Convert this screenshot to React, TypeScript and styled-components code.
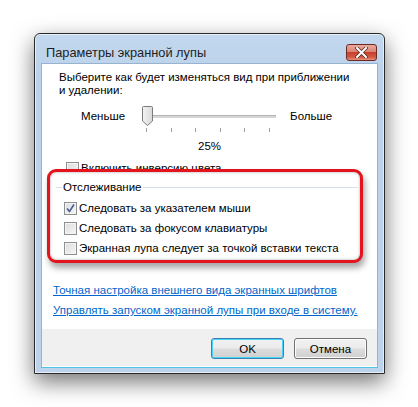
import React from 'react';
import styled, { createGlobalStyle } from 'styled-components';

const GlobalStyle = createGlobalStyle`
  html, body {
    margin: 0;
    padding: 0;
    background: #ffffff;
  }
  body {
    font-family: "Liberation Sans", Arial, sans-serif;
    font-size: 11.5px;
    color: #000;
  }
`;

const Page = styled.div`
  width: 418px;
  height: 407px;
  padding: 33px 0 0 34px;
  box-sizing: border-box;
  overflow: hidden;
`;

const Window = styled.div`
  width: 351px;
  height: 341px;
  box-sizing: border-box;
  border: 1px solid #2a2a2a;
  border-radius: 6px 6px 0 0;
  background: linear-gradient(#c2d8ef, #bcd2ea 40px, #bdd3eb);
  box-shadow: 0 8px 22px rgba(0, 0, 0, 0.55), inset 0 0 0 1px rgba(255, 255, 255, 0.6);
  display: flex;
  flex-direction: column;
  padding: 0 6px 5px 6px;
`;

const TitleBar = styled.div`
  height: 29px;
  display: flex;
  align-items: center;
  justify-content: space-between;
  padding: 0 1px 0 5px;
`;

const Title = styled.span`
  font-size: 12.8px;
  color: #1e1e1e;
  padding-top: 8px;
`;

const CloseButton = styled.div`
  width: 31px;
  height: 17px;
  margin-top: 8px;
  box-sizing: border-box;
  border: 1px solid #6b2a22;
  border-radius: 3px;
  background: linear-gradient(#e9a99c 0%, #d98676 45%, #c7402b 50%, #d05a45 80%, #e6917c 100%);
  display: flex;
  align-items: center;
  justify-content: center;
`;

const Body = styled.div`
  flex: 1;
  display: flex;
  flex-direction: column;
  border: 1px solid #98b3cf;
  border-bottom: none;
`;

const Content = styled.div`
  flex: 1;
  background: #ffffff;
  padding: 7px 0 0 0;
  display: flex;
  flex-direction: column;
`;

const Intro = styled.div`
  padding-left: 17px;
  line-height: 13px;
`;

const SliderRow = styled.div`
  display: flex;
  align-items: center;
  margin-top: 9px;
  padding-left: 39px;
  height: 20px;
`;

const SliderLabel = styled.span<{ $gap: number }>`
  margin-right: ${({ $gap }) => $gap}px;
`;

const Track = styled.div`
  position: relative;
  width: 134px;
  height: 20px;
  margin-right: 14px;
`;

const TrackLine = styled.div`
  position: absolute;
  left: 4px;
  right: 0;
  top: 9px;
  height: 2px;
  background: #d6d6d6;
  border-top: 1px solid #b4b4b4;
`;

const Thumb = styled.svg`
  position: absolute;
  left: 0;
  top: 0;
`;

const Ticks = styled.div`
  display: flex;
  justify-content: space-between;
  width: 124px;
  margin-left: 104px;
  margin-top: 2px;
  height: 4px;
`;

const Tick = styled.div`
  width: 1px;
  height: 4px;
  background: #a0a0a0;
`;

const Percent = styled.div`
  text-align: center;
  margin-top: 8px;
`;

const CheckRow = styled.div<{ $indent: number }>`
  display: flex;
  align-items: center;
  gap: 2px;
  padding-left: ${({ $indent }) => $indent}px;
  height: 20px;
`;

const Box = styled.div`
  width: 13px;
  height: 13px;
  box-sizing: border-box;
  border: 1px solid #8e8f8f;
  background: linear-gradient(135deg, #dcdcdc, #f6f6f6);
  box-shadow: inset 0 0 0 1px #f4f4f4;
  display: flex;
  align-items: center;
  justify-content: center;
`;

const CheckText = styled.span`
  white-space: nowrap;
`;

const ClippedRow = styled.div`
  height: 14px;
  overflow: hidden;
  margin-top: 6px;
`;

const Highlight = styled.div`
  position: relative;
  z-index: 1;
  margin: -3px 0 0 5px;
  width: 316px;
  height: 94px;
  box-sizing: border-box;
  border: 3px solid #e3141d;
  border-radius: 9px;
  background: #ffffff;
  box-shadow: 2px 5px 6px rgba(0, 0, 0, 0.35), inset 0 0 3px rgba(0, 0, 0, 0.35);
  padding: 7px 0 0 0;
`;

const Legend = styled.div`
  display: flex;
  align-items: center;
  height: 16px;
  padding-left: 6px;
  margin-bottom: 3px;
`;

const LegendLine = styled.div<{ $grow?: boolean }>`
  height: 1px;
  background: #d5dfe5;
  ${({ $grow }) => ($grow ? 'flex: 1; margin-right: 2px;' : 'width: 6px;')}
`;

const LegendText = styled.span`
  padding: 0 2px 0 1px;
`;

const Links = styled.div`
  display: flex;
  flex-direction: column;
  gap: 7px;
  padding-left: 11px;
  margin-top: 21px;
`;

const LinkText = styled.a`
  color: #0066cc;
  text-decoration: underline;
  line-height: 13px;
  cursor: pointer;
`;

const Footer = styled.div`
  height: 37px;
  background: #f0f0f0;
  display: flex;
  align-items: center;
  justify-content: flex-end;
  gap: 10px;
  padding-right: 10px;
  border-bottom: 1px solid #ffffff;
`;

const Button = styled.div<{ $primary?: boolean }>`
  width: 73px;
  height: 21px;
  box-sizing: border-box;
  border-radius: 3px;
  border: 1px solid ${({ $primary }) => ($primary ? '#3c7fb1' : '#707070')};
  background: linear-gradient(#f2f2f2 0%, #ebebeb 48%, #dddddd 52%, #cfcfcf 100%);
  box-shadow: inset 0 0 0 1px ${({ $primary }) => ($primary ? '#48d4f8' : '#fcfcfc')};
  display: flex;
  align-items: center;
  justify-content: center;
  margin-top: 2px;
`;

const BottomEdge = styled.div`
  height: 1px;
  background: #4fc3e8;
`;

const CloseIcon = () => (
  <svg width="13" height="11" viewBox="0 0 13 11">
    <path d="M2 1 L11 10 M11 1 L2 10" stroke="#5a2b22" strokeWidth="3.6" strokeLinecap="round" />
    <path d="M2 1 L11 10 M11 1 L2 10" stroke="#ffffff" strokeWidth="2" strokeLinecap="round" />
  </svg>
);

const CheckBox = ({ checked }: { checked?: boolean }) => (
  <Box>
    {checked && (
      <svg width="9" height="9" viewBox="0 0 9 9">
        <path d="M1 4.5 L3.5 7.5 L8 0.5" fill="none" stroke="#4a5c94" strokeWidth="1.6" />
      </svg>
    )}
  </Box>
);

const Check = ({ label, checked, indent }: { label: string; checked?: boolean; indent: number }) => (
  <CheckRow $indent={indent}>
    <CheckBox checked={checked} />
    <CheckText>{label}</CheckText>
  </CheckRow>
);

export default function App() {
  return (
    <>
      <GlobalStyle />
      <Page>
        <Window>
          <TitleBar>
            <Title>Параметры экранной лупы</Title>
            <CloseButton>
              <CloseIcon />
            </CloseButton>
          </TitleBar>
          <Body>
            <Content>
              <Intro>
                Выберите как будет изменяться вид при приближении
                <br />и удалении:
              </Intro>
              <SliderRow>
                <SliderLabel $gap={17}>Меньше</SliderLabel>
                <Track>
                  <TrackLine />
                  <Thumb width="11" height="20" viewBox="0 0 11 20">
                    <defs>
                      <linearGradient id="thumb" x1="0" x2="1">
                        <stop offset="0" stopColor="#f4f4f4" />
                        <stop offset="1" stopColor="#d8d8d8" />
                      </linearGradient>
                    </defs>
                    <path
                      d="M1.5 0.5 H9.5 Q10.5 0.5 10.5 1.5 V15 L5.5 19.5 L0.5 15 V1.5 Q0.5 0.5 1.5 0.5 Z"
                      fill="url(#thumb)"
                      stroke="#7b7b7b"
                    />
                  </Thumb>
                </Track>
                <SliderLabel $gap={0}>Больше</SliderLabel>
              </SliderRow>
              <Ticks>
                {[0, 1, 2, 3, 4, 5].map((i) => (
                  <Tick key={i} />
                ))}
              </Ticks>
              <Percent>25%</Percent>
              <ClippedRow>
                <Check label="Включить инверсию цвета" indent={24} />
              </ClippedRow>
              <Highlight>
                <Legend>
                  <LegendLine />
                  <LegendText>Отслеживание</LegendText>
                  <LegendLine $grow />
                </Legend>
                <Check label="Следовать за указателем мыши" indent={14} checked />
                <Check label="Следовать за фокусом клавиатуры" indent={14} />
                <Check label="Экранная лупа следует за точкой вставки текста" indent={14} />
              </Highlight>
              <Links>
                <LinkText>Точная настройка внешнего вида экранных шрифтов</LinkText>
                <LinkText>Управлять запуском экранной лупы при входе в систему.</LinkText>
              </Links>
            </Content>
            <Footer>
              <Button $primary>OK</Button>
              <Button>Отмена</Button>
            </Footer>
          </Body>
          <BottomEdge />
        </Window>
      </Page>
    </>
  );
}
